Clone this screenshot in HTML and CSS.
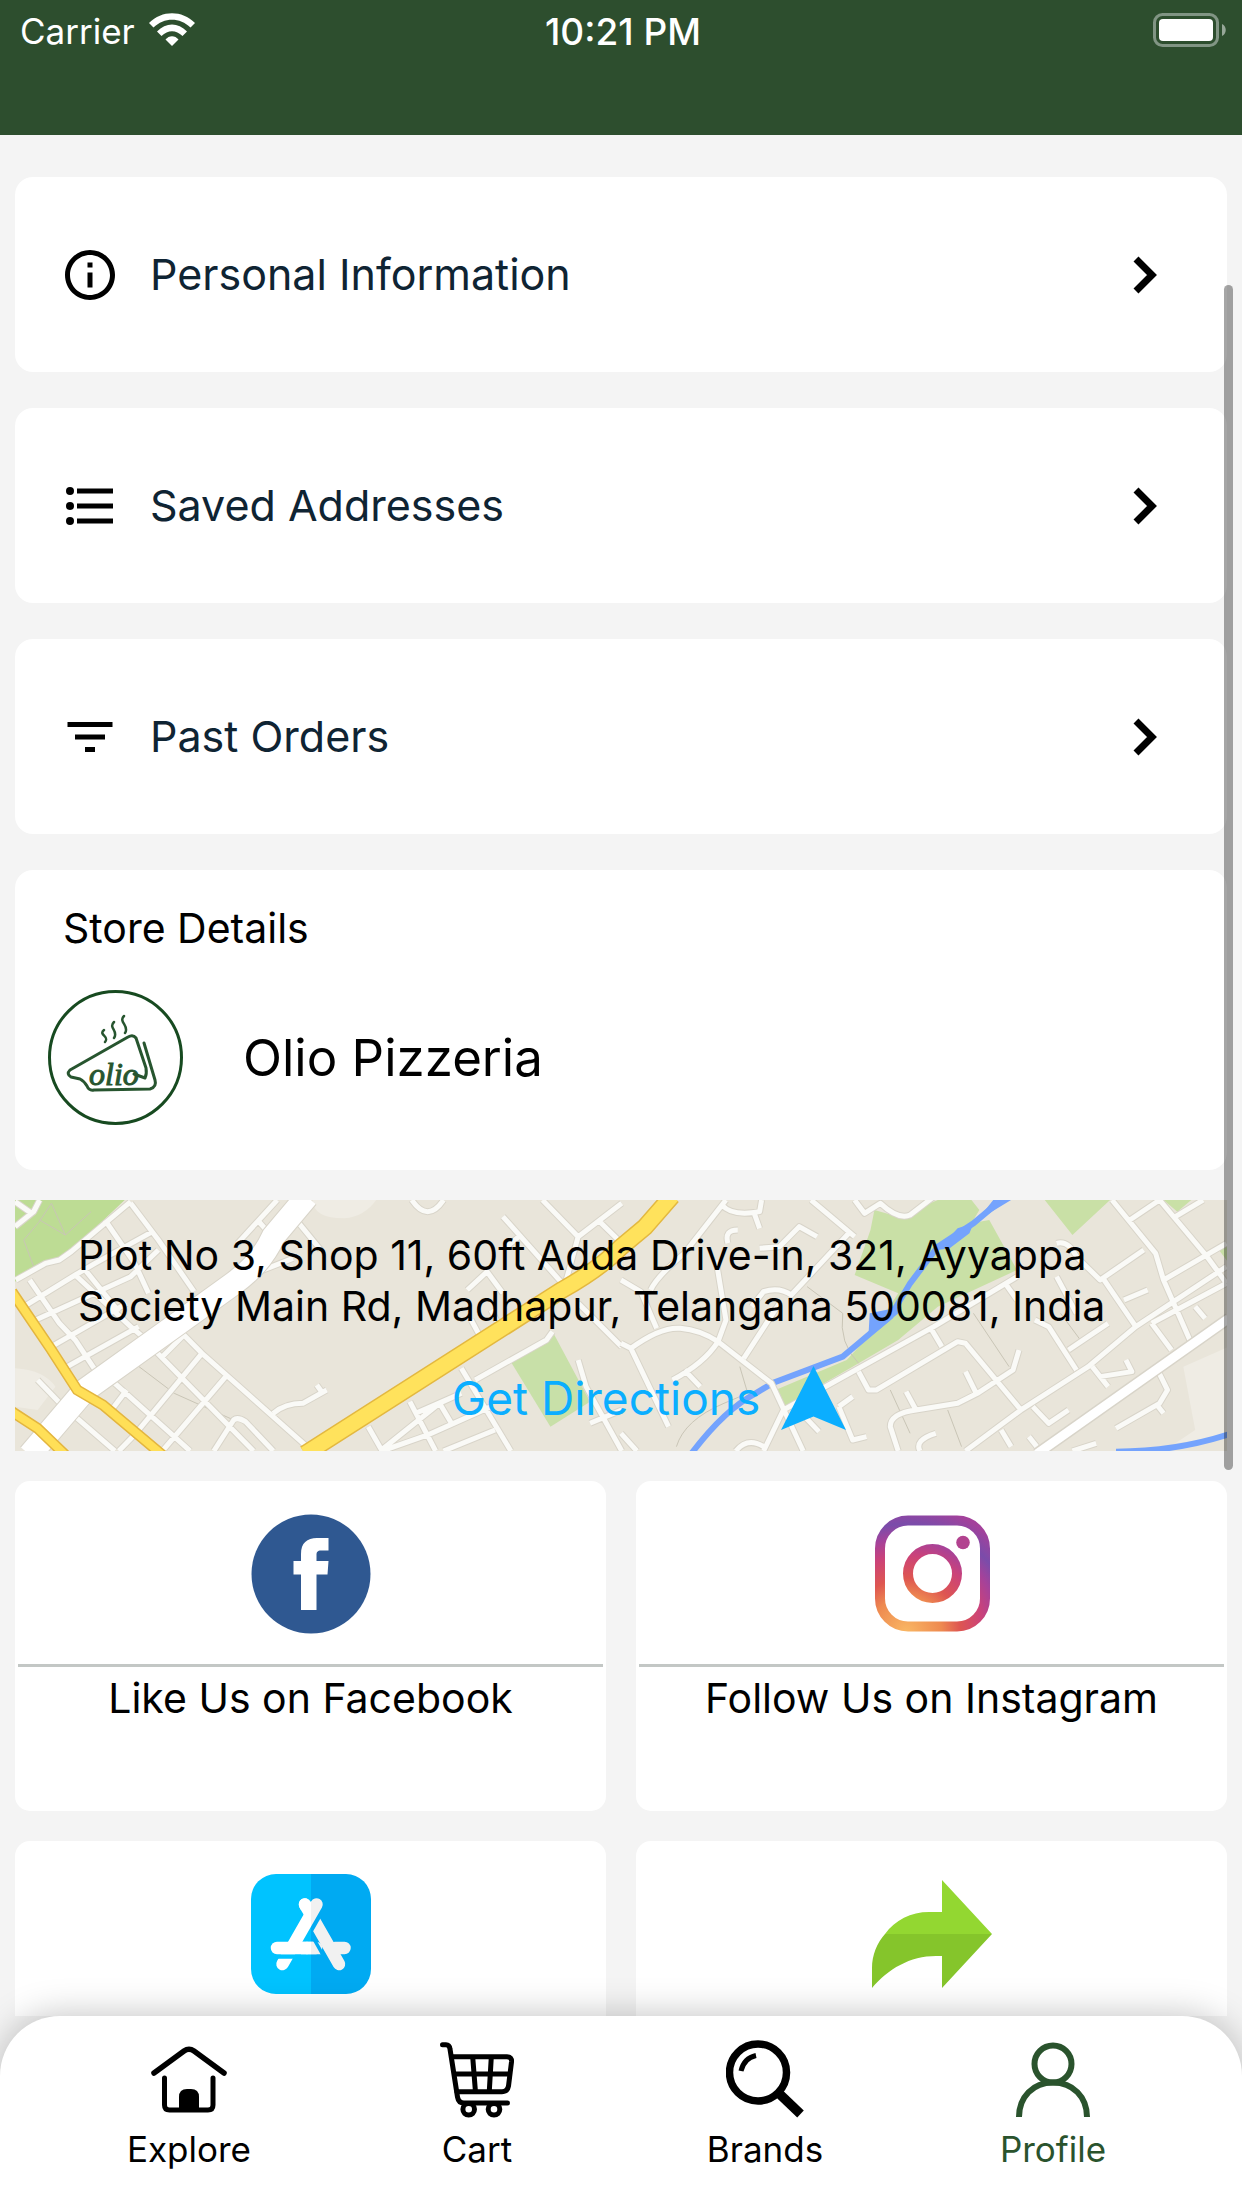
FILE: index.html
```
<!DOCTYPE html>
<html lang="en">
<head>
    <meta charset="UTF-8">
    <title>Olio Pizzeria - Profile</title>
    <meta name="viewport" content="width=device-width, initial-scale=1.0">
    <link rel="stylesheet" href="styles.css">
</head>
<body>
    <header class="header">
        <div class="status-left">
            <span>Carrier</span>
            <svg class="wifi" viewBox="0 0 46 33" aria-hidden="true">
                <path d="M0 10C13-3 33-3 46 10L41.500 14.500C31 4 15 4 4.500 14.500Z"/>
                <path d="M8 18.500C17 9 29 9 38 18.500L33.500 23C27 16.500 19 16.500 12.500 23Z"/>
                <path d="M16.500 26.500C20 22 26 22 29.500 26.500L23 33Z"/>
            </svg>
        </div>
        <time class="clock">10:21 PM</time>
        <svg class="battery" viewBox="0 0 73 34" aria-hidden="true">
            <rect x="1.500" y="1.500" width="63" height="31" rx="8" fill="none" stroke="#819584" stroke-width="3"/>
            <rect x="6" y="6" width="54" height="22" rx="4" fill="#fff"/>
            <path d="M69 11C74 13 74 21 69 23Z" fill="#96a798"/>
        </svg>
    </header>

    <main class="content">
        <nav class="menu" aria-label="Account">
            <a class="menu-row" href="#personal">
                <svg class="menu-icon" viewBox="0 0 24 24" aria-hidden="true"><path d="M11 7h2v2h-2zm0 4h2v6h-2zm1-9C6.480 2 2 6.480 2 12s4.480 10 10 10 10-4.480 10-10S17.520 2 12 2zm0 18c-4.410 0-8-3.590-8-8s3.590-8 8-8 8 3.590 8 8-3.590 8-8 8z"/></svg>
                <span>Personal Information</span>
                <svg class="chevron" viewBox="0 0 24 38" aria-hidden="true"><path d="M3 3L19 19L3 35"/></svg>
            </a>
            <a class="menu-row" href="#addresses">
                <svg class="menu-icon" viewBox="0 0 60 60" aria-hidden="true">
                    <circle cx="10" cy="15" r="4"/><circle cx="10" cy="30" r="4"/><circle cx="10" cy="45" r="4"/>
                    <path d="M17 12.500h36v5H17zM17 27.500h36v5H17zM17 42.500h36v5H17z"/>
                </svg>
                <span>Saved Addresses</span>
                <svg class="chevron" viewBox="0 0 24 38" aria-hidden="true"><path d="M3 3L19 19L3 35"/></svg>
            </a>
            <a class="menu-row" href="#orders">
                <svg class="menu-icon" viewBox="0 0 24 24" aria-hidden="true"><path d="M10 18h4v-2h-4v2zM3 6v2h18V6H3zm3 7h12v-2H6v2z"/></svg>
                <span>Past Orders</span>
                <svg class="chevron" viewBox="0 0 24 38" aria-hidden="true"><path d="M3 3L19 19L3 35"/></svg>
            </a>
        </nav>

        <section class="store">
            <h2>Store Details</h2>
            <div class="store-row">
                <svg class="store-logo" viewBox="0 0 135 135" aria-hidden="true">
                    <circle cx="67.500" cy="67.500" r="66" fill="#fff" stroke="#174a20" stroke-width="3"/>
                    <path d="M86 84L97 88Q99 84 98 78L88 48Q85 44 80 47L22 80Q18 84 23 87L32 89Q36 91 39 96Q41 101 46 100L102 99Q109 97 107 90L96 53" fill="none" stroke="#27552f" stroke-width="3" stroke-linecap="round" stroke-linejoin="round"/>
                    <path d="M56 40C50 45 62 46 57 52M66 32C60 38 71 41 66 48M76 26C70 32 82 36 77 43" fill="none" stroke="#27552f" stroke-width="2.500" stroke-linecap="round"/>
                    <text class="logo-text" x="41" y="95">olio</text>
                </svg>
                <h1>Olio Pizzeria</h1>
            </div>
        </section>

        <section class="map-card">
            <svg class="map" viewBox="0 0 1212 251" preserveAspectRatio="xMidYMid slice" aria-hidden="true">
                <defs>
                    <path id="streets-west" d="M100 60L85 95L38 140M38 65L80 100M330 65L180 215L150 240L115 250L40 300M330 70L400 180L490 335M265 120L340 250L375 340M75 300L150 430L190 480L240 570M190 285L330 440L360 470M215 270L300 395M385 155L240 250L190 285L60 380M400 210L330 290L90 420M130 500L320 370M170 560L350 440M700 60L600 190M650 120L680 160M755 130L810 210M740 235L600 300M570 285L590 320M460 460L510 520L770 795M390 510L640 813M280 600L440 770L480 813M190 710L290 813M570 590L410 813M510 520L350 750M335 770L300 813M460 470L410 530M320 630L285 685M690 700Q720 670 765 670L825 630M800 615L815 640M540 813L590 720Q600 710 620 725L690 813M95 600L160 680M1200 600L1380 480L1395 455M930 740L965 813M1035 665L1100 813M960 813L1110 670L1165 640M1050 700L1165 640M1165 565L1290 813M965 813L1080 765L1240 680M1110 670L1140 730M1120 813L1250 750M1460 540L1480 620L1570 813M1490 730L1570 690M1370 60L1460 170L1570 70M1510 120L1570 190M1270 110L1420 310M1040 60Q1080 130 1120 60M1310 170L1280 200M1180 330L1230 275L1270 340M1190 420L1215 475M1240 390L1260 435M1460 170L1430 300M1460 370L1570 500"/>
                    <path id="streets-east" d="M480 60L590 170M590 60L615 100L655 70Q700 120 730 105L790 50M575 160L430 345Q400 320 360 335L330 380M255 75Q280 110 350 95L355 60M335 95L350 145M240 240L265 420L245 485M75 330Q90 290 160 220L265 60M295 150Q260 150 270 190M350 205L400 200L450 140L495 170M0 490L25 505Q100 440 150 445Q200 450 245 485L380 610L460 813M25 505L120 740M245 485Q210 550 130 600M160 570L200 620M310 535L400 370M0 300L50 335L90 445M360 813L410 690L790 440L1000 290M600 575L625 630L645 630L850 485L870 490L1010 690M785 450L810 500M720 635L745 690L850 670L900 640L990 570L1005 510M870 575L895 635M745 690Q680 700 680 740L700 813M755 813Q740 780 795 760M870 813L1010 690L1180 560L1300 440L1529 260M1045 420L1080 440L1150 570M970 310L1000 360M1240 60L1350 220L1370 300L1440 490M1100 190Q1130 180 1150 230L1210 300L1320 210M1285 120L1360 60L1480 230L1529 310M1400 110L1470 60M1370 300L1529 190M1220 300L1300 440M1100 290L1150 400M1130 510L1180 470L1230 430M1270 360L1330 330M1340 430L1529 310M1340 430L1390 510M1450 380L1475 415M1190 560L1230 620M1210 590L1290 575L1275 540M1355 570L1380 630L1360 670L1250 745M1350 670L1370 700M1040 680L1080 730L1130 690M290 813Q320 770 360 800M0 760L40 813M440 680L500 755M550 680L585 780L620 770M550 680L585 650M960 750L985 800M1030 770L1050 800M1140 813L1200 790"/>
                    <path id="highway" d="M290 254L547 90Q586 68 606 47L630 27L657-4"/>
                </defs>
                <rect width="1212" height="251" fill="#e9e5da"/>
                <g transform="translate(-15 -20) scale(.396 .3333)">
                    <path d="M38 60H315L190 200L155 240L120 250L38 305Z" fill="#bddc94"/>
                    <path class="trail" d="M130 70Q100 130 60 180M100 120L165 165L230 95M130 70L165 165M60 180L85 260"/>
                    <path d="M1290 545L1400 465L1490 665L1390 740Z" fill="#c8e0a8"/>
                    <path d="M38 565Q110 570 140 620L95 690L38 680ZM790 60H950Q920 110 870 115Q790 115 790 60Z" fill="#efece4"/>
                    <path class="trail" d="M340 550L440 640L590 720"/>
                    <use href="#streets-west" class="curb"/>
                    <use href="#streets-west" class="street"/>
                    <path class="curb avenue-curb" d="M75 825L215 630L450 430L590 310Q660 250 690 170L775 50"/>
                    <path class="street avenue" d="M75 825L215 630L450 430L590 310Q660 250 690 170L775 50"/>
                    <path class="gold-edge" d="M30 335L130 510L195 630L260 675L410 825M30 695L95 745L165 825"/>
                    <path class="gold" d="M30 335L130 510L195 630L260 675L410 825M30 695L95 745L165 825"/>
                </g>
                <g transform="translate(606 -20) scale(.396 .3333)">
                    <path d="M640 90L700 110L800 60H885L905 90L885 130L930 120L1000 270L800 380L700 480L600 550L410 680L390 630L570 540L640 450L700 340L590 285L630 150ZM1070 60H1235L1140 165ZM1370 60H1440L1405 95ZM1510 210L1535 190V250Z" fill="#c9e0a6"/>
                    <path d="M1535 500L1420 560L1450 750L1400 790L1535 770Z" fill="#efece4"/>
                    <path class="trail" d="M140 800Q160 720 260 670L320 640L300 560M470 320L560 400Q550 490 600 550M890 400L980 560M680 630L730 760M825 690L860 800M1110 400L1160 480"/>
                    <path class="river" d="M175 825Q260 690 340 640L385 608L560 530L600 490L680 410L730 310L800 200L890 130L965 55M1250 815Q1400 815 1535 763"/>
                    <path d="M625 465L628 400L690 385L705 395L650 450ZM800 210L850 145L890 130L880 160L830 205ZM900 120L940 60H985L930 100Z" fill="#74a3fd"/>
                    <use href="#streets-east" class="curb"/>
                    <use href="#streets-east" class="street"/>
                    <path class="curb road-curb" d="M1050 822L1535 415"/>
                    <path class="street road" d="M1050 822L1535 415"/>
                </g>
                <use href="#highway" fill="none" stroke="#e3b840" stroke-width="18"/>
                <use href="#highway" fill="none" stroke="#ffe25c" stroke-width="15"/>
            </svg>
            <p class="address">Plot No 3, Shop 11, 60ft Adda Drive-in, 321, Ayyappa Society Main Rd, Madhapur, Telangana 500081, India</p>
            <a class="directions" href="#directions">
                <span>Get Directions</span>
                <svg class="pointer" viewBox="0 0 65 64" aria-hidden="true"><path d="M32.500 0L65 64L32.500 50.500L0 64Z"/></svg>
            </a>
        </section>

        <section class="tiles">
            <a class="tile" href="#facebook">
                <svg class="tile-icon" viewBox="0 0 120 120" aria-hidden="true">
                    <circle cx="60" cy="60" r="59.500" fill="#2f5891"/>
                    <path d="M50 96V60.500H42.500V47H50V40C50 29 56 24 66 24H77.500V36.500H70C66.500 36.500 65.500 38 65.500 41V47H77.500L76.500 60.500H65.500V96Z" fill="#fff"/>
                </svg>
                <span class="tile-label">Like Us on Facebook</span>
            </a>
            <a class="tile" href="#instagram">
                <svg class="tile-icon" viewBox="0 0 120 120" aria-hidden="true">
                    <defs>
                        <radialGradient id="insta" gradientUnits="userSpaceOnUse" cx="34" cy="118" r="142">
                            <stop offset="0" stop-color="#f9b764"/>
                            <stop offset=".25" stop-color="#ee8a50"/>
                            <stop offset=".38" stop-color="#de5651"/>
                            <stop offset=".54" stop-color="#cb4279"/>
                            <stop offset=".66" stop-color="#a5429a"/>
                            <stop offset=".76" stop-color="#7a4caa"/>
                            <stop offset=".9" stop-color="#a3419b"/>
                        </radialGradient>
                    </defs>
                    <g fill="none" stroke="url(#insta)" stroke-width="10">
                        <rect x="8" y="6.500" width="105" height="106" rx="28"/>
                        <circle cx="60.500" cy="59.500" r="24.500"/>
                    </g>
                    <circle cx="91" cy="28.500" r="6.800" fill="#b2428f"/>
                </svg>
                <span class="tile-label">Follow Us on Instagram</span>
            </a>
            <a class="tile" href="#rate" aria-label="App Store">
                <svg class="tile-icon" viewBox="0 0 120 120" aria-hidden="true">
                    <defs>
                        <clipPath id="app-shape"><rect width="120" height="120" rx="25"/></clipPath>
                        <mask id="app-sticks" maskUnits="userSpaceOnUse" x="0" y="0" width="120" height="120">
                            <g stroke="#fff" stroke-width="12.500" stroke-linecap="round">
                                <path d="M54 30.500L88 90"/>
                                <path d="M69 24L49 59" stroke="#000" stroke-width="21" stroke-linecap="butt"/>
                                <path d="M65.500 30.500L31.500 90"/>
                                <path d="M20 82.500H50" stroke="#000" stroke-width="4.500" stroke-linecap="butt"/>
                                <path d="M26 74H56"/><path d="M56 74H65M84 74H93.500"/>
                                <path d="M50 67.750H62.500L70 80.250H50Z" fill="#fff" stroke="none"/>
                                <path d="M61.300 62L72.800 82.500" stroke="#000" stroke-width="3.500" stroke-linecap="butt"/>
                                <path d="M54 30.500L59 39"/>
                            </g>
                        </mask>
                    </defs>
                    <g clip-path="url(#app-shape)">
                        <path d="M0 0H60V120H0Z" fill="#00c3ff"/>
                        <path d="M60 0H120V120H60Z" fill="#00aaf2"/>
                    </g>
                    <g mask="url(#app-sticks)">
                        <path d="M0 0H60V120H0Z" fill="#fff"/>
                        <path d="M60 0H120V120H60Z" fill="#f1f1f1"/>
                    </g>
                </svg>
            </a>
            <a class="tile" href="#share" aria-label="Share">
                <svg class="tile-icon" viewBox="0 0 120 120" aria-hidden="true">
                    <path d="M70 6L120 60H13C23 46 39 38 57 38H70Z" fill="#93d731"/>
                    <path d="M13 60H120L70 114V82H64C38 82 16 95 0 114V94C0 81 5 69 13 60Z" fill="#85c52b"/>
                </svg>
            </a>
        </section>

        <div class="scroll-thumb"></div>
    </main>

    <nav class="tabbar" aria-label="Main">
        <a class="tab" href="#explore">
            <svg class="tab-icon" viewBox="0 0 78 78" aria-hidden="true">
                <path d="M4 33L34 11Q39 7.500 44 11L74 33" stroke-width="5.500"/>
                <path d="M14.500 38V65Q14.500 70 19.500 70H58Q63 70 63 65V38"/>
                <path class="solid" d="M29 71V57Q29 49 37 49H41Q49 49 49 57V71Z"/>
            </svg>
            <span>Explore</span>
        </a>
        <a class="tab" href="#cart">
            <svg class="tab-icon" viewBox="0 0 78 78" aria-hidden="true">
                <path d="M4.500 4.700H8Q11.500 4.700 12 9L19.500 57Q20.500 63 26 63H69.500"/>
                <path d="M14 16.700H69Q74 16.700 73.500 22L70.500 46Q69.500 51.700 64 51.700H19M17 34H71M34.700 17L37.400 51M53.300 17L51.300 51"/>
                <circle cx="30.700" cy="69.300" r="5.800"/><circle cx="56" cy="69.300" r="5.800"/>
            </svg>
            <span>Cart</span>
        </a>
        <a class="tab" href="#brands">
            <svg class="tab-icon" viewBox="0 0 78 78" aria-hidden="true">
                <circle cx="32" cy="32.500" r="28.500" stroke-width="7.500"/>
                <path class="flat" d="M15 31Q18 18 30 15.500"/>
                <path class="flat" d="M52 52.500L74.500 74" stroke-width="9.500"/>
            </svg>
            <span>Brands</span>
        </a>
        <a class="tab active" href="#profile" aria-current="page">
            <svg class="tab-icon" viewBox="0 0 78 78" aria-hidden="true">
                <circle cx="39" cy="24" r="18.500" stroke-width="6"/>
                <path class="flat" d="M5 77C5 57 19 42.500 39 42.500S73 57 73 77" stroke-width="6"/>
            </svg>
            <span>Profile</span>
        </a>
    </nav>
</body>
</html>
```
FILE: styles.css
```
* { box-sizing: border-box; }
body {
    margin: 0;
    height: 100vh;
    display: flex;
    flex-direction: column;
    background: #f4f4f4;
    color: #000;
    font-family: Inter, "Liberation Sans", sans-serif;
    font-size: 41px;
    line-height: 51px;
}
a { color: inherit; text-decoration: none; }
h1, h2, p { margin: 0; font-weight: 400; }
svg { display: block; flex: none; }

.header {
    flex: none;
    height: 135px;
    padding: 6px 16px 0 20px;
    display: grid;
    grid-template-columns: 1fr auto 1fr;
    align-items: start;
    background: #2d4e2e;
    color: #fff;
    font-size: 35px;
}
.status-left { display: flex; gap: 14px; }
.wifi { width: 46px; height: 33px; margin-top: 7px; fill: #fff; }
.clock { font-size: 37px; font-weight: 500; }
.battery { width: 73px; height: 34px; margin-top: 7px; justify-self: end; }

.content {
    flex: 1;
    min-height: 0;
    position: relative;
    overflow: hidden;
    padding: 42px 15px 0;
}

.menu { display: grid; gap: 36px; margin-bottom: 36px; }
.menu-row {
    height: 195px;
    padding: 0 70px 0 45px;
    display: flex;
    align-items: center;
    gap: 30px;
    background: #fff;
    border-radius: 18px;
    color: #0f2433;
    font-size: 43px;
}
.menu-icon { width: 60px; height: 60px; fill: #000; }
.chevron {
    width: 24px;
    height: 38px;
    margin-left: auto;
    fill: none;
    stroke: #000;
    stroke-width: 7;
}

.store {
    padding: 33px 33px 45px;
    background: #fff;
    border-radius: 18px;
}
.store h2 { padding-left: 15px; font-size: 41px; }
.store-row { display: flex; align-items: center; gap: 60px; margin-top: 36px; }
.store-row h1 { font-size: 51px; }
.store-logo { width: 135px; height: 135px; }
.logo-text {
    font: italic 32px "Liberation Serif", serif;
    fill: #27552f;
    stroke: #27552f;
}

.map-card {
    position: relative;
    margin: 30px 0;
    padding: 30px 63px 21px;
}
.map { position: absolute; inset: 0; width: 100%; height: 100%; }
.address, .directions { position: relative; }
.directions {
    display: flex;
    justify-content: center;
    align-items: center;
    gap: 21px;
    margin-top: 34px;
    padding-left: 56px;
    color: #0baeff;
    font-size: 46px;
}
.pointer { width: 65px; height: 64px; fill: #0baeff; }

/* map layers */
.curb, .street, .gold, .gold-edge, .river, .trail { fill: none; }
.map path { vector-effect: non-scaling-stroke; }
.curb { stroke: #d8d4c9; stroke-width: 7; stroke-linejoin: round; }
.street { stroke: #fafaf7; stroke-width: 5; stroke-linejoin: round; }
.avenue-curb { stroke-width: 25; }
.avenue { stroke: #fff; stroke-width: 23; }
.road-curb { stroke-width: 12; }
.road { stroke: #fff; stroke-width: 9; }
.gold-edge { stroke: #e3b53f; stroke-width: 11; }
.gold { stroke: #ffdf57; stroke-width: 8; }
.river { stroke: #74a3fd; stroke-width: 6; }
.trail { stroke: #c9c5b6; stroke-width: 1; }

.tiles { display: grid; grid-template-columns: 1fr 1fr; gap: 30px; }
.tile {
    height: 330px;
    padding: 33px 3px 0;
    background: #fff;
    border-radius: 15px;
    text-align: center;
}
.tile-icon { width: 120px; height: 120px; margin: 0 auto 30px; }
.tile-label { display: block; padding-top: 6px; border-top: 3px solid #c3c7c5; }

.scroll-thumb {
    position: absolute;
    right: 9px;
    top: 8%;
    width: 9px;
    height: 63%;
    border-radius: 5px;
    background: rgba(0, 0, 0, 0.35);
}

.tabbar {
    flex: none;
    position: relative;
    height: 192px;
    padding: 24px 45px 0;
    display: grid;
    grid-template-columns: repeat(4, 1fr);
    background: #fff;
    border-radius: 60px 60px 0 0;
    box-shadow: 0 0 36px rgba(0, 0, 0, 0.25);
    font-size: 35px;
}
.tab { display: flex; flex-direction: column; align-items: center; gap: 6px; }
.tab-icon {
    width: 78px;
    height: 78px;
    fill: none;
    stroke: currentColor;
    stroke-width: 5;
    stroke-linecap: round;
    stroke-linejoin: round;
}
.flat { stroke-linecap: butt; }
.solid { fill: currentColor; stroke: none; }
.active { color: #2a532d; }
```
